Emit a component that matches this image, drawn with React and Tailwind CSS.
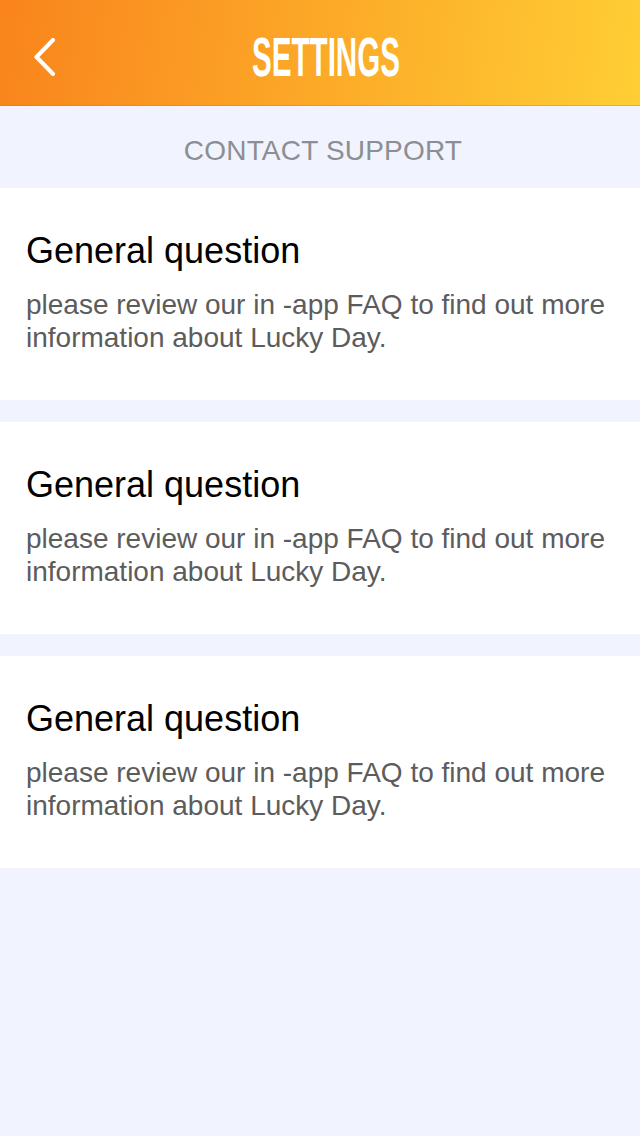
import React from "react";

const cards = [1, 2, 3];

const App = () => {
  return (
    <div className="flex min-h-[1136px] flex-col bg-[#f1f4fe] font-['Liberation_Sans',Arial,sans-serif]">
      {/* Header */}
      <header className="relative flex h-[106px] items-center justify-center bg-[linear-gradient(98deg,#f9841c,#ffce34)] pl-[13px] pt-[7px] shadow-[inset_0_-1px_0_rgba(220,110,0,0.35)]">
        <button className="absolute left-[33px] top-[38px] text-white">
          <svg width="24" height="38" viewBox="0 0 24 38" fill="none" className="block">
            <path d="M20 2 L3.5 19 L20 36" stroke="currentColor" strokeWidth="4" strokeLinecap="round" strokeLinejoin="round" />
          </svg>
        </button>
        <h1 className="origin-center scale-x-[0.528] text-[56px] font-bold leading-none whitespace-nowrap text-white">SETTINGS</h1>
      </header>

      {/* Section title */}
      <div className="flex h-[82px] items-center justify-center pl-[6px] pt-[8px] text-[28px] leading-none tracking-[0.2px] text-[#8c8f91]">
        CONTACT SUPPORT
      </div>

      {/* Cards */}
      <div className="flex flex-col gap-[22px]">
        {cards.map((id) => (
          <div key={id} className="h-[212px] bg-white px-[26px] pt-[43px]">
            <h2 className="text-[36px] leading-[40px] text-black">General question</h2>
            <p className="mt-[17px] text-[28px] leading-[33px] text-[#5c5c5c]">
              please review our in -app FAQ to find out more information about Lucky Day.
            </p>
          </div>
        ))}
      </div>
    </div>
  );
};

export default App;
